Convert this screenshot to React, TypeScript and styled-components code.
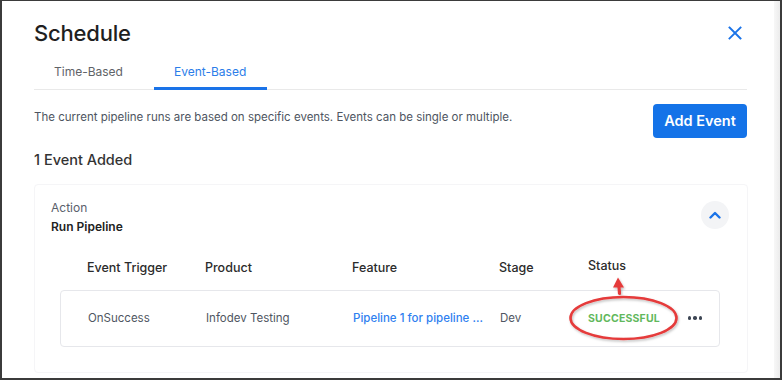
import React from "react";
import styled, { createGlobalStyle } from "styled-components";

const Global = createGlobalStyle`
  html, body { margin: 0; padding: 0; background: #fff; }
  body { font-family: Inter, "Noto Sans", Arial, sans-serif; }
  * { box-sizing: border-box; }
`;

const Frame = styled.div`
  width: 782px;
  height: 380px;
  border: 2px solid #3b3b3b;
  border-top-width: 1px;
  display: flex;
  background: #fff;
  overflow: hidden;
`;

const Modal = styled.div`
  flex: 1;
  padding: 18px 26px 0 32px;
  display: flex;
  flex-direction: column;
`;

const Gutter = styled.div`
  width: 6px;
  background: linear-gradient(to right, #f7f7f7, #ececec);
`;

const Header = styled.div`
  display: flex;
  align-items: center;
  justify-content: space-between;
  height: 28px;
`;

const Title = styled.h1`
  margin: 0;
  font-size: 22px;
  font-weight: 500;
  color: #1f1f1f;
  letter-spacing: -0.2px;
`;

const CloseButton = styled.button`
  border: 0;
  background: none;
  padding: 0;
  width: 20px;
  height: 20px;
  margin-right: 3px;
  display: flex;
  align-items: center;
  justify-content: center;
  color: #1a73e8;
`;

const Tabs = styled.div`
  display: flex;
  gap: 10px;
  margin-top: 8px;
  border-bottom: 1.5px solid #e9e9e9;
  margin-right: 1px;
`;

const Tab = styled.div<{ $active?: boolean }>`
  padding: 10px 21px 10px 20px;
  font-size: 12px;
  color: ${(p) => (p.$active ? "#2b7de9" : "#5f6368")};
  border-bottom: 3px solid ${(p) => (p.$active ? "#1a73e8" : "transparent")};
  margin-bottom: -1.5px;
  height: 35px;
  display: flex;
  align-items: center;
`;

const IntroRow = styled.div`
  display: flex;
  justify-content: space-between;
  align-items: flex-start;
  margin-top: 14px;
`;

const Description = styled.p`
  margin: 6px 0 0;
  font-size: 11.5px;
  color: #4e5561;
`;

const PrimaryButton = styled.button`
  height: 34px;
  width: 94px;
  border: 0;
  border-radius: 4px;
  background: #1473e8;
  color: #fff;
  font-family: inherit;
  font-size: 14.5px;
  font-weight: 600;
  margin-right: 1px;
`;

const CountLabel = styled.div`
  margin-top: 13px;
  font-size: 14.5px;
  font-weight: 500;
  color: #333;
`;

const Card = styled.div`
  margin-top: 16px;
  border: 1px solid #f5f5f7;
  border-radius: 4px;
  padding: 15px 18px 25px 16px;
`;

const ActionRow = styled.div`
  display: flex;
  justify-content: space-between;
  align-items: center;
`;

const ActionInfo = styled.div`
  display: flex;
  flex-direction: column;
  gap: 4px;
`;

const ActionLabel = styled.span`
  font-size: 12px;
  color: #5a606b;
`;

const ActionValue = styled.span`
  font-size: 12px;
  font-weight: 600;
  color: #222;
`;

const RoundButton = styled.button`
  width: 28px;
  height: 28px;
  border-radius: 50%;
  border: 0;
  background: #f3f4f6;
  display: flex;
  align-items: center;
  justify-content: center;
  color: #1a73e8;
  padding: 0;
  margin-top: -3px;
`;

const Table = styled.div`
  margin: 24px 9px 0 9px;
`;

const cols = "118px 147px 147px 89px 1fr 24px";

const HeadRow = styled.div`
  display: grid;
  grid-template-columns: ${cols};
  padding: 0 17px 0 27px;
  font-size: 12.5px;
  font-weight: 500;
  color: #2b2b2b;
  height: 20px;
  align-items: center;
`;

const HeadCell = styled.div<{ $raised?: boolean }>`
  position: relative;
  top: ${(p) => (p.$raised ? "-2px" : "0")};
`;

const BodyRow = styled.div`
  margin-top: 12px;
  display: grid;
  grid-template-columns: ${cols};
  padding: 0 17px 0 27px;
  height: 57px;
  align-items: center;
  border: 1px solid #e6e7eb;
  border-radius: 4px;
  font-size: 11.5px;
  color: #4f5662;
`;

const Link = styled.span`
  color: #2f7ff0;
  font-weight: 500;
`;

const StatusCell = styled.div`
  position: relative;
  font-size: 10.5px;
  font-weight: 700;
  color: #62b85c;
  letter-spacing: 0.2px;
  margin-left: -1px;
`;

const Annotation = styled.svg`
  position: absolute;
  left: -20px;
  top: -37px;
  overflow: visible;
  pointer-events: none;
`;

const Dots = styled.div`
  display: flex;
  gap: 2px;
  justify-self: end;
  span {
    width: 3.5px;
    height: 3.5px;
    border-radius: 50%;
    background: #3d4654;
  }
`;

export default function App() {
  return (
    <>
      <Global />
      <Frame>
        <Modal>
          <Header>
            <Title>Schedule</Title>
            <CloseButton aria-label="Close">
              <svg width="14" height="14" viewBox="0 0 14 14">
                <path d="M1.5 1.5 L12.5 12.5 M12.5 1.5 L1.5 12.5" stroke="currentColor" strokeWidth="1.9" strokeLinecap="square" />
              </svg>
            </CloseButton>
          </Header>
          <Tabs>
            <Tab>Time-Based</Tab>
            <Tab $active>Event-Based</Tab>
          </Tabs>
          <IntroRow>
            <Description>
              The current pipeline runs are based on specific events. Events can be single or multiple.
            </Description>
            <PrimaryButton>Add Event</PrimaryButton>
          </IntroRow>
          <CountLabel>1 Event Added</CountLabel>
          <Card>
            <ActionRow>
              <ActionInfo>
                <ActionLabel>Action</ActionLabel>
                <ActionValue>Run Pipeline</ActionValue>
              </ActionInfo>
              <RoundButton aria-label="Collapse">
                <svg width="12" height="8" viewBox="0 0 12 8">
                  <path d="M1.5 6.5 L6 2 L10.5 6.5" fill="none" stroke="currentColor" strokeWidth="2.4" strokeLinecap="round" strokeLinejoin="round" />
                </svg>
              </RoundButton>
            </ActionRow>
            <Table>
              <HeadRow>
                <HeadCell>Event Trigger</HeadCell>
                <HeadCell>Product</HeadCell>
                <HeadCell>Feature</HeadCell>
                <HeadCell>Stage</HeadCell>
                <HeadCell $raised>Status</HeadCell>
                <HeadCell />
              </HeadRow>
              <BodyRow>
                <div>OnSuccess</div>
                <div>Infodev Testing</div>
                <Link>Pipeline 1 for pipeline ...</Link>
                <div>Dev</div>
                <StatusCell>
                  SUCCESSFUL
                  <Annotation width="112" height="70" viewBox="0 0 112 70">
                    <defs>
                      <filter id="sh" x="-20%" y="-20%" width="140%" height="140%">
                        <feDropShadow dx="1" dy="1.5" stdDeviation="1" floodColor="#000" floodOpacity="0.25" />
                      </filter>
                    </defs>
                    <g filter="url(#sh)">
                      <ellipse cx="55.5" cy="43" rx="53" ry="21" fill="none" stroke="#e53a3a" strokeWidth="2.6" />
                      <path d="M51 12 L51.5 18.5" stroke="#e53a3a" strokeWidth="3.2" strokeLinecap="round" />
                      <path d="M50 2.5 L56 12.5 L45 12.5 Z" fill="#e53a3a" />
                    </g>
                  </Annotation>
                </StatusCell>
                <Dots>
                  <span />
                  <span />
                  <span />
                </Dots>
              </BodyRow>
            </Table>
          </Card>
        </Modal>
        <Gutter />
      </Frame>
    </>
  );
}
